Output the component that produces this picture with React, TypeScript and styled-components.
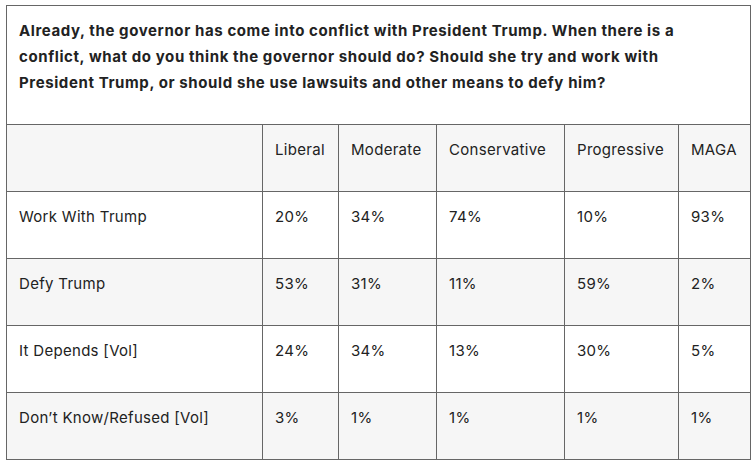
import React from 'react';
import styled, { createGlobalStyle } from 'styled-components';

const GlobalStyle = createGlobalStyle`
  body {
    margin: 0;
    background: #ffffff;
    font-family: Inter, "Noto Sans", sans-serif;
    color: #222222;
  }
`;

const Page = styled.div`
  padding: 5px 6px 0 6px;
`;

const Table = styled.table`
  width: 744px;
  border-collapse: collapse;
  table-layout: fixed;
  font-size: 15px;
`;

const QuestionCell = styled.td`
  border: 1px solid #666666;
  background: #ffffff;
  height: 118px;
  padding: 0 12px;
  vertical-align: top;
`;

const Question = styled.p`
  margin: 12px 0 0 0;
  font-weight: 700;
  font-size: 15px;
  line-height: 26px;
  letter-spacing: 0.6px;
  color: #222222;
`;

const Row = styled.tr<{ $shaded?: boolean }>`
  background: ${(p) => (p.$shaded ? '#f6f6f6' : '#ffffff')};
`;

const Cell = styled.td`
  border: 1px solid #666666;
  height: 67px;
  padding: 13px 12px 0 12px;
  vertical-align: top;
  line-height: 24px;
  letter-spacing: 0.3px;
  box-sizing: border-box;
`;

const columns = ['Liberal', 'Moderate', 'Conservative', 'Progressive', 'MAGA'];
const widths = [256, 76, 98, 128, 114, 72];

const rows: { label: string; values: string[] }[] = [
  { label: 'Work With Trump', values: ['20%', '34%', '74%', '10%', '93%'] },
  { label: 'Defy Trump', values: ['53%', '31%', '11%', '59%', '2%'] },
  { label: 'It Depends [Vol]', values: ['24%', '34%', '13%', '30%', '5%'] },
  { label: 'Don’t Know/Refused [Vol]', values: ['3%', '1%', '1%', '1%', '1%'] },
];

export default function App() {
  return (
    <>
      <GlobalStyle />
      <Page>
        <Table>
          <colgroup>
            {widths.map((w, i) => (
              <col key={i} style={{ width: w }} />
            ))}
          </colgroup>
          <tbody>
            <tr>
              <QuestionCell colSpan={6}>
                <Question>
                  Already, the governor has come into conflict with President Trump. When there is a
                  <br />
                  conflict, what do you think the governor should do? Should she try and work with
                  <br />
                  President Trump, or should she use lawsuits and other means to defy him?
                </Question>
              </QuestionCell>
            </tr>
            <Row $shaded>
              <Cell />
              {columns.map((c) => (
                <Cell key={c}>{c}</Cell>
              ))}
            </Row>
            {rows.map((r, i) => (
              <Row key={r.label} $shaded={i % 2 === 1}>
                <Cell>{r.label}</Cell>
                {r.values.map((v, j) => (
                  <Cell key={j}>{v}</Cell>
                ))}
              </Row>
            ))}
          </tbody>
        </Table>
      </Page>
    </>
  );
}
